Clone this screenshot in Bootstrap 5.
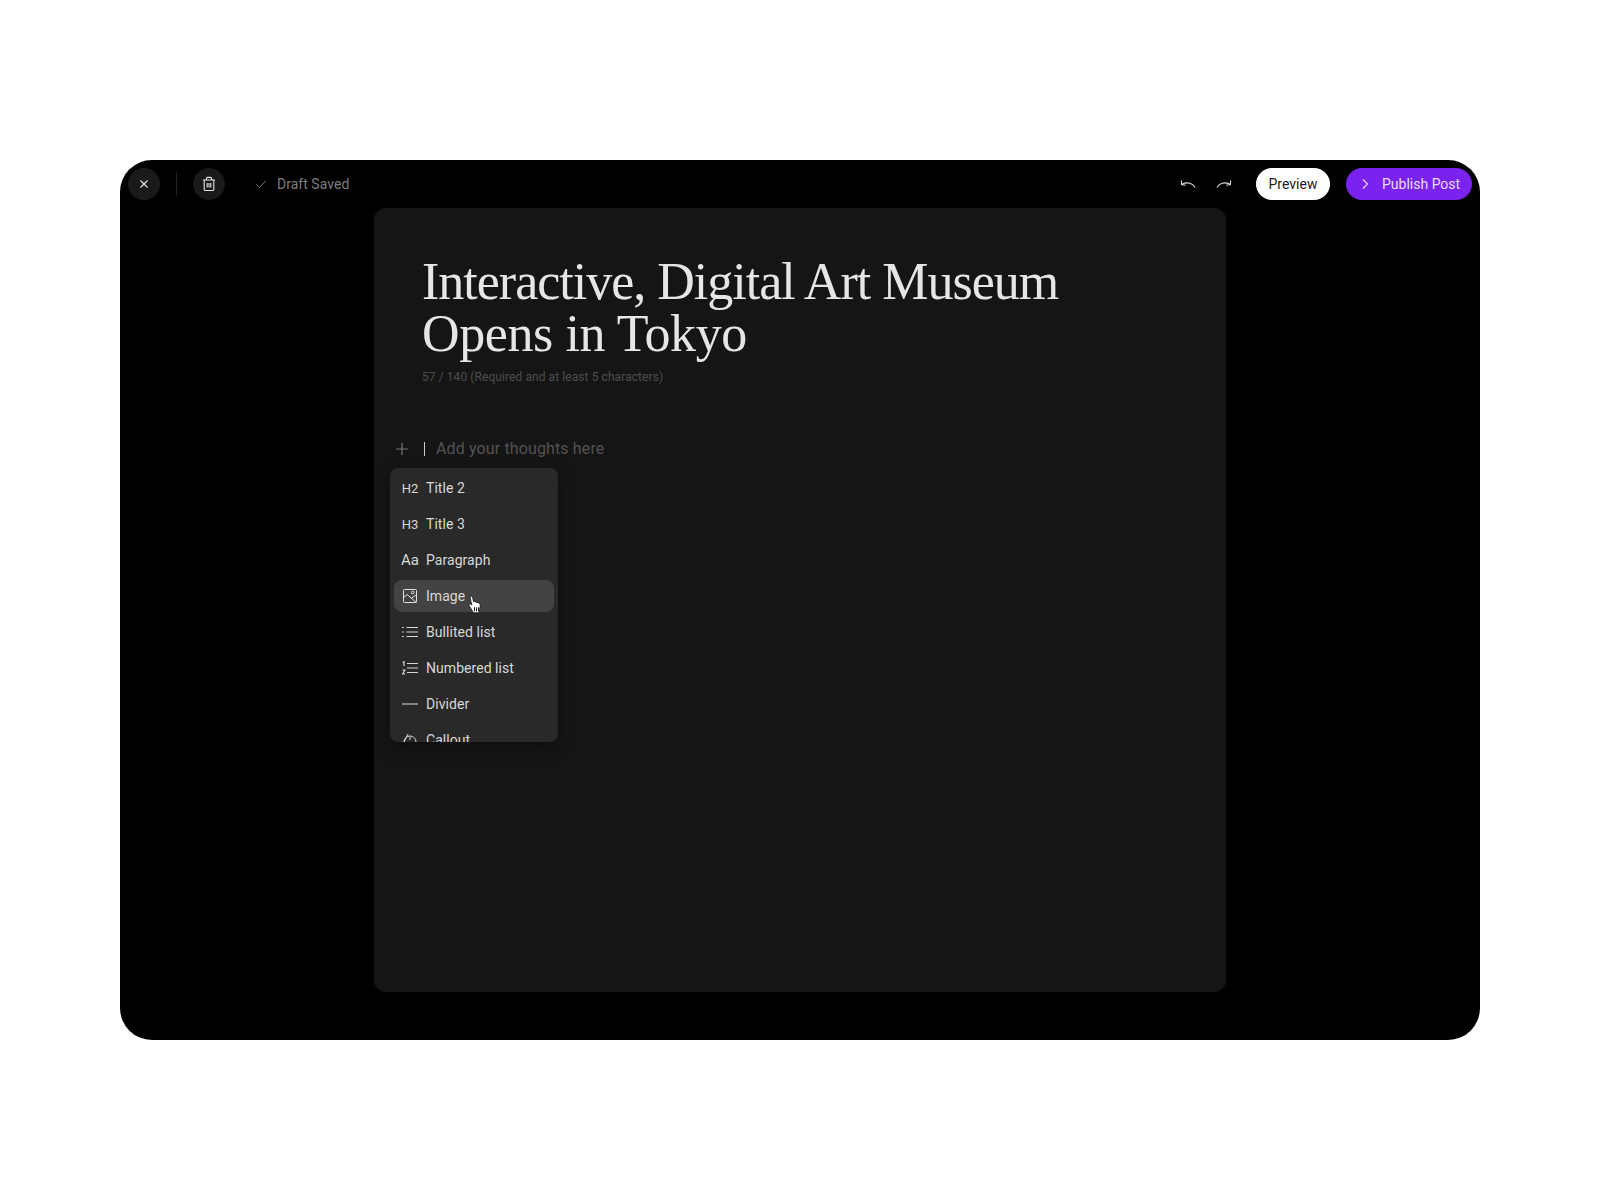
<!DOCTYPE html>
<html lang="en">
<head>
<meta charset="utf-8">
<title>Editor</title>
<link href="https://cdn.jsdelivr.net/npm/bootstrap@5.3.0/dist/css/bootstrap.min.css" rel="stylesheet">
<style>
body{background:#fff;font-family:"Roboto","Liberation Sans",sans-serif;margin:0}
.stage{height:1200px;padding:160px 120px}
.frame{height:880px;background:#000;border-radius:32px;padding:8px 8px 48px}
.topbar{height:32px;margin-bottom:8px}
.round-btn{width:32px;height:32px;background:#1a1a1a;color:#eee;border:0;padding:0}
.vsep{width:1px;height:24px;background:#242424;margin:0 16px}
.saved{color:#7d7d7d;font-size:14px;margin-left:29px;gap:9px;letter-spacing:.03px}
.ghost-btn{background:none;border:0;padding:0;width:20px;height:20px;color:#ddd}
.btn-preview{background:#fff;color:#222;height:32px;width:74px;font-size:14px;padding:0;border:0;margin-left:22px}
.btn-publish{background:#7b22ee;color:#e9dcff;height:32px;width:126px;font-size:14px;padding:0 0 0 12px;border:0;margin-left:16px;gap:10px}
.sheet{width:852px;height:784px;margin-left:246px;background:#151515;border-radius:12px;padding:48px;position:relative}
.post-title{font-family:"Liberation Serif",serif;font-weight:400;font-size:52px;line-height:52px;color:#e6e6e6;margin:0;max-width:680px}
.title-line{display:block;letter-spacing:-1px}
.title-line-2{letter-spacing:-.4px}
.counter{font-size:12px;color:#4e4e4e;margin-top:8px;line-height:18px;letter-spacing:.08px}
.adder{margin:51px 0 0 -27px;height:24px;color:#535353;font-size:16px;letter-spacing:.13px}
.caret{width:1px;height:14px;background:#ccc;margin:0 11px 0 15px}
.blockmenu{position:absolute;left:16px;top:260px;width:168px;height:274px;background:#292929;border-radius:8px;padding:4px;overflow:hidden;box-shadow:0 6px 16px rgba(0,0,0,.35)}
.menuline{height:32px;margin-bottom:4px;border-radius:8px;padding:0 8px;color:#d8d8d8;font-size:14px;gap:8px;letter-spacing:.05px}
.menuline.hot{background:#434343;position:relative}
.ico{width:16px;flex:none;font-size:13px;font-weight:400;color:#d8d8d8;line-height:1;display:flex;justify-content:center;letter-spacing:0}
.ico-aa{font-size:15px}
.hand{position:absolute;left:73px;top:15px}
</style>
</head>
<body>
<div class="stage">
<div class="frame">
  <div class="topbar d-flex align-items-center">
    <button class="round-btn rounded-circle d-flex align-items-center justify-content-center" aria-label="Close">
      <svg width="12" height="12" viewBox="0 0 12 12" fill="none" stroke="#e6e6e6" stroke-width="1.1"><path d="M2.500 2.500l7 7M9.500 2.500l-7 7"/></svg>
    </button>
    <div class="vsep"></div>
    <button class="round-btn rounded-circle d-flex align-items-center justify-content-center" aria-label="Delete">
      <svg width="16" height="16" viewBox="0 0 16 16" fill="none" stroke="#e6e6e6" stroke-width="1.1"><path d="M2 4h12M3.200 4v9.200a1.300 1.300 0 0 0 1.300 1.300h7a1.300 1.300 0 0 0 1.300-1.300V4M5.400 4V2.600a1.200 1.200 0 0 1 1.200-1.200h2.800a1.200 1.200 0 0 1 1.200 1.200V4M6.200 7v4.500M8 7v4.500M9.800 7v4.500"/></svg>
    </button>
    <div class="saved d-flex align-items-center">
      <svg width="14" height="14" viewBox="0 0 14 14" fill="none" stroke="#7d7d7d" stroke-width="1"><path d="M2.500 7.500l3 3 6-6.500"/></svg>
      <span>Draft Saved</span>
    </div>
    <div class="ms-auto d-flex align-items-center">
      <button class="ghost-btn d-flex align-items-center justify-content-center me-3" aria-label="Undo">
        <svg width="18" height="12" viewBox="0 0 18 12" fill="none" stroke="#dcdcdc" stroke-width="1.1"><path d="M16 9.500C14 5.500 9 3.300 3 6.200M2.400 2.500L2.600 6.500 6.600 7.300"/></svg>
      </button>
      <button class="ghost-btn d-flex align-items-center justify-content-center" aria-label="Redo">
        <svg width="18" height="12" viewBox="0 0 18 12" fill="none" stroke="#dcdcdc" stroke-width="1.1"><path d="M2 9.500C4 5.500 9 3.300 15 6.200M15.600 2.500L15.400 6.500 11.400 7.300"/></svg>
      </button>
      <button class="btn btn-preview rounded-pill">Preview</button>
      <button class="btn btn-publish rounded-pill d-flex align-items-center">
        <svg width="14" height="14" viewBox="0 0 14 14" fill="none" stroke="#e9dcff" stroke-width="1.2"><path d="M5 2.500l4.500 4.500-4.500 4.500"/></svg>
        <span>Publish Post</span>
      </button>
    </div>
  </div>
  <div class="sheet">
    <h1 class="post-title"><span class="title-line">Interactive, Digital Art Museum</span> <span class="title-line title-line-2">Opens in Tokyo</span></h1>
    <div class="counter">57 / 140 (Required and at least 5 characters)</div>
    <div class="adder d-flex align-items-center">
      <svg width="14" height="14" viewBox="0 0 14 14" fill="none" stroke="#777" stroke-width="1.2"><path d="M7 1v12M1 7h12"/></svg>
      <span class="caret"></span>
      <span>Add your thoughts here</span>
    </div>
    <div class="blockmenu">
      <div class="menuline d-flex align-items-center"><span class="ico">H2</span><span>Title 2</span></div>
      <div class="menuline d-flex align-items-center"><span class="ico">H3</span><span>Title 3</span></div>
      <div class="menuline d-flex align-items-center"><span class="ico ico-aa">Aa</span><span>Paragraph</span></div>
      <div class="menuline hot d-flex align-items-center">
        <span class="ico"><svg width="14" height="14" viewBox="0 0 14 14" fill="none" stroke="#e2e2e2" stroke-width="1"><rect x=".5" y=".5" width="13" height="13" rx="1"/><path d="M.5 8.500l3.500-3 9.500 8M8.500 9l5-3"/><circle cx="9.700" cy="3.600" r="1.300"/></svg></span>
        <span>Image</span>
        <svg class="hand" width="16" height="19" viewBox="0 0 14 17"><path d="M3 1.300c.7-.6 1.600-.2 1.800.7l.9 4 .5-.1c.9-.3 1.500.1 1.700.7.8-.4 1.600-.1 1.800.6.9-.2 1.700.3 1.800 1.200.2 1.400.1 3-.3 4.300l-.9 3.200H5.600L1.700 9.300c-.5-.8.3-1.700 1.200-1.200l1.200.9L2.700 2.600c-.1-.5 0-1 .3-1.300z" fill="#fff" stroke="#111" stroke-width=".7"/><path d="M6.500 11v3.500M8.300 11v3.500M10.100 11v3.500" stroke="#111" stroke-width=".9"/></svg>
      </div>
      <div class="menuline d-flex align-items-center">
        <span class="ico"><svg width="16" height="12" viewBox="0 0 16 12" fill="none" stroke="#d8d8d8" stroke-width="1"><path d="M4.500 1.500H16M4.500 6H16M4.500 10.500H16M0 1.500h1.800M0 6h1.800M0 10.500h1.800"/></svg></span>
        <span>Bullited list</span>
      </div>
      <div class="menuline d-flex align-items-center">
        <span class="ico"><svg width="16" height="14" viewBox="0 0 16 14" fill="none" stroke="#d8d8d8" stroke-width="1"><path d="M5 2.500h11M5 7h11M5 11.500h11"/><path d="M.7 1.600l1.300-.8V5M.5 9h2.400L.5 13h2.700" stroke-width="1.200"/></svg></span>
        <span>Numbered list</span>
      </div>
      <div class="menuline d-flex align-items-center">
        <span class="ico"><svg width="16" height="2" viewBox="0 0 16 2"><path d="M0 1h16" stroke="#d8d8d8" stroke-width="1"/></svg></span>
        <span>Divider</span>
      </div>
      <div class="menuline d-flex align-items-center">
        <span class="ico"><svg width="14" height="14" viewBox="0 0 14 14" fill="none" stroke="#d8d8d8" stroke-width="1"><path d="M1 9a6 6 0 0 1 12 0v4H1zM5 1L1 9M7 4v3"/></svg></span>
        <span>Callout</span>
      </div>
    </div>
  </div>
</div>
</div>
</body>
</html>
